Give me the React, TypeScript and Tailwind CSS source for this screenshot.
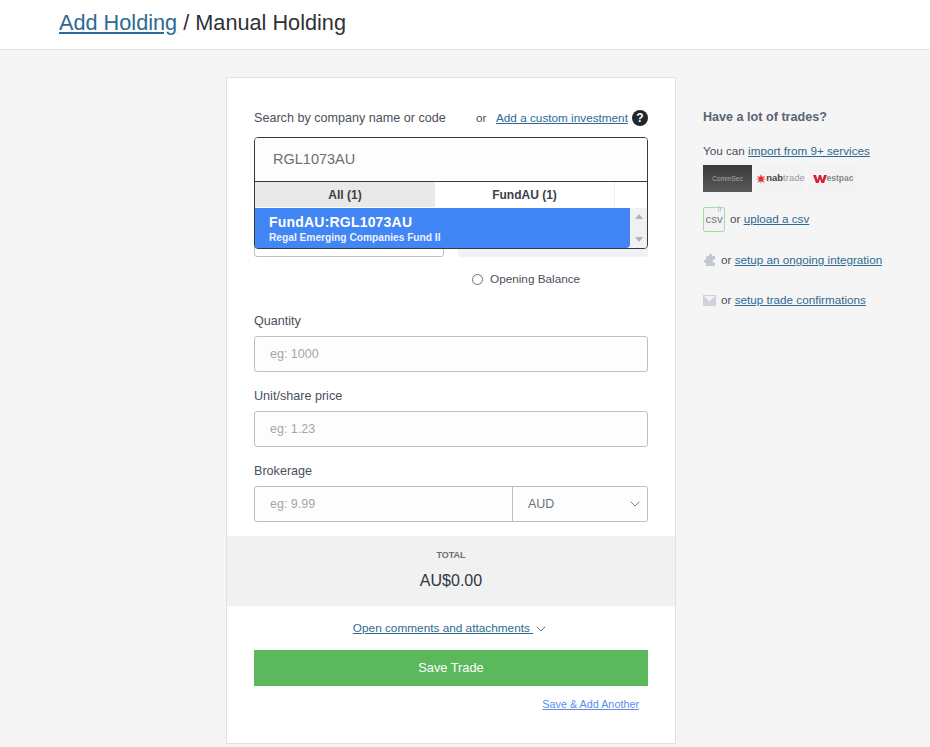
import { ChevronDown } from 'lucide-react';

const font = "[font-family:'Liberation_Sans',Arial,sans-serif]";

function Field({ label, placeholder }: { label: string; placeholder: string }) {
  return (
    <div>
      <div className="h-4 text-[12.6px] leading-[18px] text-[#4a4f5a] mb-2">{label}</div>
      <div className="h-9 border border-[#b9bfcc] rounded-[3px] bg-[#fdfdfd] pl-[15px] flex items-center text-[12.5px] text-[#a3a6ad]">
        {placeholder}
      </div>
    </div>
  );
}

function SearchDropdown() {
  return (
    <div className="absolute left-0 right-0 top-0 z-10 h-[112px] border border-[#343a40] rounded-[4px] bg-white overflow-hidden">
      <div className="h-[44px] border-b border-[#343a40] pl-[18px] flex items-center text-[14.5px] text-[#6b6f76] bg-[#fdfdfd]">
        RGL1073AU
      </div>
      <div className="h-[26px]">
        <div className="flex h-[25px] text-[12px] font-bold text-[#3a3f47]">
          <div className="w-[180px] bg-[#e9e9e9] flex items-center justify-center">All (1)</div>
          <div className="w-[180px] border-r border-[#eeeeee] flex items-center justify-center">FundAU (1)</div>
        </div>
      </div>
      <div className="flex h-[40px]">
        <div className="w-[375px] h-[40px] bg-[#4285f4] rounded-br-[4px] text-white pl-[14px] pt-[6px]">
          <div className="text-[14px] leading-[16px] font-bold tracking-[0.2px]">FundAU:RGL1073AU</div>
          <div className="text-[10.2px] leading-[13px] mt-[1px] font-bold opacity-90">Regal Emerging Companies Fund II</div>
        </div>
        <div className="flex-1 bg-[#f1f1f1] flex flex-col items-center justify-between py-[6px]">
          <div className="w-0 h-0 border-x-[4px] border-x-transparent border-b-[5px] border-b-[#b4b4b4]" />
          <div className="w-0 h-0 border-x-[4px] border-x-transparent border-t-[5px] border-t-[#b4b4b4]" />
        </div>
      </div>
    </div>
  );
}

function SideIcon({ kind }: { kind: 'puzzle' | 'mail' }) {
  if (kind === 'puzzle') {
    return (
      <svg width="13" height="13" viewBox="0 0 13 13" className="shrink-0">
        <path d="M4 2h2V1a1.4 1.4 0 0 1 3 0v1h3v3.500h-1a1.500 1.500 0 0 0 0 3h1V12H3V9H2a2 2 0 0 1 0-3.500h1V3z" fill="#c3c8d0" />
      </svg>
    );
  }
  return (
    <svg width="13" height="11" viewBox="0 0 13 11" className="shrink-0">
      <rect width="13" height="11" fill="#cfd3d9" />
      <path d="M1 1h11L6.500 6.500z" fill="#f1f2f4" />
    </svg>
  );
}

export default function App() {
  return (
    <div className={`${font} min-h-[747px] h-[747px] overflow-hidden bg-[#f5f5f5] text-[#4a4f5a]`}>
      <header className="h-[50px] bg-white border-b border-[#e3e3e3] pl-[59px] flex items-center pb-[3px] text-[21.7px] text-[#2f3136]">
        <a className="text-[#2d6a94] underline">Add Holding</a>
        <span className="whitespace-pre"> / Manual Holding</span>
      </header>

      <main className="flex pl-[226px] pt-[27px]">
        <section className="w-[450px] h-[667px] bg-white border border-[#e2e2e2] shrink-0">
          <div className="px-[27px] pt-[31px]">
            <div className="flex items-center h-[18px] text-[11.75px] whitespace-nowrap">
              <span className="text-[12.6px] leading-4 w-[222px] -mt-[1px]">Search by company name or code</span>
              <span className="w-[20px]">or</span>
              <a className="text-[#2d6a94] underline w-[132px]">Add a custom investment</a>
              <span className="ml-[4px] w-4 h-4 rounded-full bg-[#22262d] text-white text-[12px] font-bold flex items-center justify-center">?</span>
            </div>

            <div className="relative mt-[10px] h-[120px]">
              <SearchDropdown />
              <div className="absolute left-0 bottom-0 w-[190px] h-9 border border-[#b9bfcc] rounded-[3px]" />
              <div className="absolute right-0 bottom-0 w-[190px] h-9 bg-[#f1f2f8] rounded-[3px]" />
            </div>

            <div className="mt-[15px] pl-[218px] flex items-center h-[14px] text-[11.75px]">
              <span className="w-[11px] h-[11px] rounded-full border border-[#6f7379] mr-[7px]" />
              Opening Balance
            </div>

            <div className="mt-[26px] flex flex-col gap-[15px]">
              <Field label="Quantity" placeholder="eg: 1000" />
              <Field label="Unit/share price" placeholder="eg: 1.23" />
              <div>
                <div className="h-4 text-[12.6px] leading-[18px] mb-2">Brokerage</div>
                <div className="h-9 border border-[#b9bfcc] rounded-[3px] bg-[#fdfdfd] flex text-[12.5px]">
                  <div className="w-[258px] border-r border-[#b9bfcc] pl-[15px] flex items-center text-[#a3a6ad]">eg: 9.99</div>
                  <div className="flex-1 pl-[15px] pr-[4px] flex items-center justify-between text-[#6b6f76]">
                    AUD
                    <ChevronDown className="w-[16px] h-[16px] text-[#7d828a]" strokeWidth={1.5} />
                  </div>
                </div>
              </div>
            </div>
          </div>

          <div className="mt-[14px] h-[70px] bg-[#f1f1f1] flex flex-col items-center pt-[14px]">
            <div className="text-[9px] leading-[11px] font-bold text-[#6b6f76]">TOTAL</div>
            <div className="mt-[10px] text-[16px] leading-5 text-[#2f3640]">AU$0.00</div>
          </div>

          <div className="mt-[15px] flex items-center justify-center h-4 text-[11.8px] text-[#2d6a94]">
            <a className="underline whitespace-pre">Open comments and attachments </a>
            <ChevronDown className="w-4 h-4 text-[#5b7f9b]" strokeWidth={1.5} />
          </div>

          <div className="mx-[27px] mt-[13px] h-9 bg-[#5cb85c] text-white text-[12.8px] flex items-center justify-center">Save Trade</div>

          <div className="mt-[11px] pr-[36px] text-right text-[10.8px] leading-[14px]">
            <a className="text-[#5a8dee] underline">Save &amp; Add Another</a>
          </div>
        </section>

        <aside className="ml-[27px] w-[200px] text-[11.7px]">
          <div className="mt-[32px] text-[12.6px] leading-4 font-bold text-[#5a6472]">Have a lot of trades?</div>
          <div className="mt-[19px] leading-[14px]">
            You can <a className="text-[#2d6a94] underline">import from 9+ services</a>
          </div>
          <div className="mt-[7px] flex gap-[4px] h-[27px]">
            <div className="w-[49px] bg-gradient-to-b from-[#3a3a3a] to-[#5a5a5a] text-[#a8a8a8] text-[6.5px] flex items-center justify-center">CommSec</div>
            <div className="w-[49px] bg-[#f3f3f3] flex items-center justify-center text-[9.5px] font-bold text-[#444]">
              <svg width="10" height="10" viewBox="0 0 10 10" className="shrink-0">
                <path d="M5 0l1 3 3-1-2 2.500L10 5l-3 .8L8.500 9 5.500 7 5 10 4.300 7 1.500 9 3 5.800 0 5l3-.5L1 2l3 1z" fill="#e2313c" />
              </svg>
              nab<span className="font-normal text-[#999]">trade</span>
            </div>
            <div className="w-[48px] bg-[#f3f3f3] flex items-center justify-center text-[8.5px] font-bold text-[#888]">
              <svg width="14" height="8" viewBox="0 0 14 8" className="shrink-0">
                <path d="M0 0h3l1.500 5L6 0h2l1.500 5L11 0h3l-3 8H8.500L7 4 5.500 8H3z" fill="#d5202f" />
              </svg>
              estpac
            </div>
          </div>
          <div className="mt-[15px] flex items-center h-[25px]">
            <div className="relative w-[22px] h-[25px] border border-[#a6dca6] rounded-[2px] bg-[#f3f3f3] text-[11.5px] text-[#777] flex items-center justify-center mr-[5px]">
              csv
              <span className="absolute -top-[2px] right-[3px] w-[3px] h-[6px] rounded-full border border-[#a9c9e8]" />
            </div>
            <span className="-mt-[2px]">or <a className="text-[#2d6a94] underline">upload a csv</a></span>
          </div>
          <div className="mt-[21px] flex items-center h-[14px] gap-[5px]">
            <SideIcon kind="puzzle" />
            <span>or <a className="text-[#2d6a94] underline">setup an ongoing integration</a></span>
          </div>
          <div className="mt-[26px] flex items-center h-[14px] gap-[5px]">
            <SideIcon kind="mail" />
            <span>or <a className="text-[#2d6a94] underline">setup trade confirmations</a></span>
          </div>
        </aside>
      </main>
    </div>
  );
}
